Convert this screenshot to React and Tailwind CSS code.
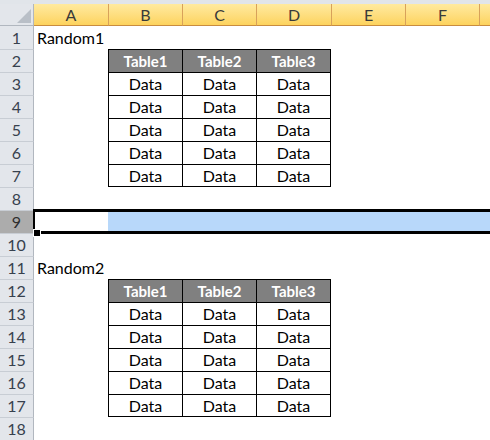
const COLS = [
  { id: "A", w: "w-[74px]" },
  { id: "B", w: "w-[74px]" },
  { id: "C", w: "w-[74px]" },
  { id: "D", w: "w-[75px]" },
  { id: "E", w: "w-[74px]" },
  { id: "F", w: "w-[74px]" },
  { id: "G", w: "flex-1", hidden: true },
];

const ROWS = Array.from({ length: 18 }, (_, i) => i + 1);
const TABLE_COLS = ["B", "C", "D"];
const HEADERS = { B: "Table1", C: "Table2", D: "Table3" };

function tableKind(row) {
  if (row === 2 || row === 12) return "head";
  if ((row >= 3 && row <= 7) || (row >= 13 && row <= 17)) return "body";
  return null;
}

function Cell({ row, col }) {
  const kind = tableKind(row);
  const inTable = kind && TABLE_COLS.includes(col.id);

  if (inTable) {
    const last = row === 7 || row === 17;
    return (
      <div
        className={`${col.w} shrink-0 flex items-center justify-center border-l border-t border-black ${
          col.id === "D" ? "border-r" : ""
        } ${last ? "border-b" : ""} ${
          kind === "head" ? "bg-[#808080] text-white font-bold text-[15px]" : "text-black text-[16px]"
        }`}
      >
        {kind === "head" ? HEADERS[col.id] : "Data"}
      </div>
    );
  }

  let text = "";
  if (col.id === "A" && row === 1) text = "Random1";
  if (col.id === "A" && row === 11) text = "Random2";

  return (
    <div className={`${col.w} shrink-0 flex items-center pl-[3px] text-[16px] text-black whitespace-nowrap`}>
      {text}
    </div>
  );
}

// thick border + highlight around the selected row 9
function RowSelection() {
  return (
    <div className="absolute left-[33px] top-[209px] right-0 h-[28px] flex flex-col pointer-events-none">
      <div className="h-[3px] bg-black" />
      <div className="flex h-[19px]">
        <div className="w-[2px] bg-black" />
        <div className="w-[73px]" />
        <div className="flex-1 bg-[#b8d8fa]" />
      </div>
      <div className="flex h-[3px]">
        <div className="w-[8px]" />
        <div className="flex-1 bg-black" />
      </div>
      <div className="absolute left-0 top-[20px] w-[8px] h-[8px] bg-white flex items-center justify-center">
        <div className="w-[6px] h-[6px] bg-black" />
      </div>
    </div>
  );
}

export default function App() {
  return (
    <div
      className="relative w-[490px] h-[440px] overflow-hidden bg-white select-none"
      style={{ fontFamily: "Lato, 'Open Sans', sans-serif" }}
    >
      <div className="h-[4px] bg-[#e1e5ea]" />

      {/* column headers */}
      <div className="flex h-[22px]">
        <div className="w-[34px] shrink-0 flex items-end justify-end pr-[2px] pb-[2px] bg-[#e3e6eb] border-r border-b border-[#b1b7bf]">
          <svg width="14" height="14" viewBox="0 0 14 14">
            <polygon points="14,0 14,14 0,14" fill="#b9bfc7" />
          </svg>
        </div>
        {COLS.map((c, i) => (
          <div
            key={c.id}
            className={`${c.w} shrink-0 flex items-center justify-center bg-gradient-to-b from-[#ffea9f] to-[#fdd35d] border-b border-[#c98c3f] text-[16px] text-[#3a3a3a] ${
              i > 0 ? "border-l border-l-[#d8a15a]" : ""
            }`}
          >
            {c.hidden ? "" : c.id}
          </div>
        ))}
      </div>

      {ROWS.map((r) => (
        <div key={r} className="flex h-[23px]">
          <div
            className={`w-[34px] shrink-0 flex items-center justify-center border-r border-[#b1b7bf] text-[16px] ${
              r > 1 ? "border-t border-t-[#c8cdd4]" : ""
            } ${r === 9 ? "bg-[#acacac] text-[#2e2e2e]" : "bg-[#e3e6eb] text-[#37414e]"}`}
          >
            {r}
          </div>
          {COLS.map((c) => (
            <Cell key={c.id} row={r} col={c} />
          ))}
        </div>
      ))}

      <RowSelection />
    </div>
  );
}
